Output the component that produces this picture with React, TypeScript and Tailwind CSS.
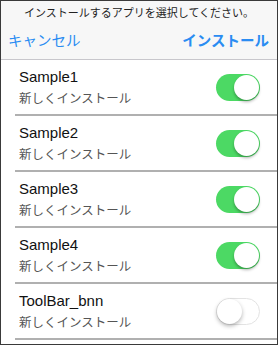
import React from "react";

const FONT = '"Liberation Sans", "Noto Sans CJK JP", sans-serif';

function Toggle({ on }: { on: boolean }) {
  if (on) {
    return (
      <div className="relative w-[44px] h-[27px] rounded-full bg-[#4cd964] shrink-0">
        <div className="absolute right-[1px] top-[1px] w-[25px] h-[25px] rounded-full bg-white shadow-[0_2px_3px_rgba(0,0,0,0.3)]" />
      </div>
    );
  }
  return (
    <div className="relative w-[44px] h-[27px] rounded-full bg-white border border-[#e3e3e3] shrink-0">
      <div className="absolute left-0 top-0 w-[25px] h-[25px] rounded-full bg-white shadow-[0_2px_4px_rgba(0,0,0,0.3)]" />
    </div>
  );
}

const rows = [
  { name: "Sample1", on: true },
  { name: "Sample2", on: true },
  { name: "Sample3", on: true },
  { name: "Sample4", on: true },
  { name: "ToolBar_bnn", on: false },
];

export default function App() {
  return (
    <div
      className="w-[278px] h-[345px] border border-[#3a3a3a] bg-white flex flex-col overflow-hidden"
      style={{ fontFamily: FONT }}
    >
      <div className="h-[58px] bg-[#f7f7f7] flex flex-col shrink-0">
        <div className="pt-[5px] text-center text-[11px] leading-[14px] text-[#222]">
          インストールするアプリを選択してください。
        </div>
        <div className="flex justify-between items-center pl-[7px] pr-[8px] mt-[12px] text-[14.5px] leading-[18px] text-[#2a8cf2]">
          <span>キャンセル</span>
          <span className="font-bold">インストール</span>
        </div>
      </div>
      <div className="h-px bg-[#c8c7cc] shrink-0" />
      {rows.map((r) => (
        <div key={r.name} className="flex flex-col shrink-0">
          <div className="h-[54px] flex items-center justify-between pl-[18px] pr-[17px]">
            <div className="flex flex-col">
              <div className="text-[15px] leading-[18px] text-[#111]">{r.name}</div>
              <div className="text-[12.5px] leading-[16px] mt-[5px] text-[#555]">新しくインストール</div>
            </div>
            <Toggle on={r.on} />
          </div>
          <div className="ml-[14px] h-[2px] bg-[#b0b0b0]" />
        </div>
      ))}
    </div>
  );
}
